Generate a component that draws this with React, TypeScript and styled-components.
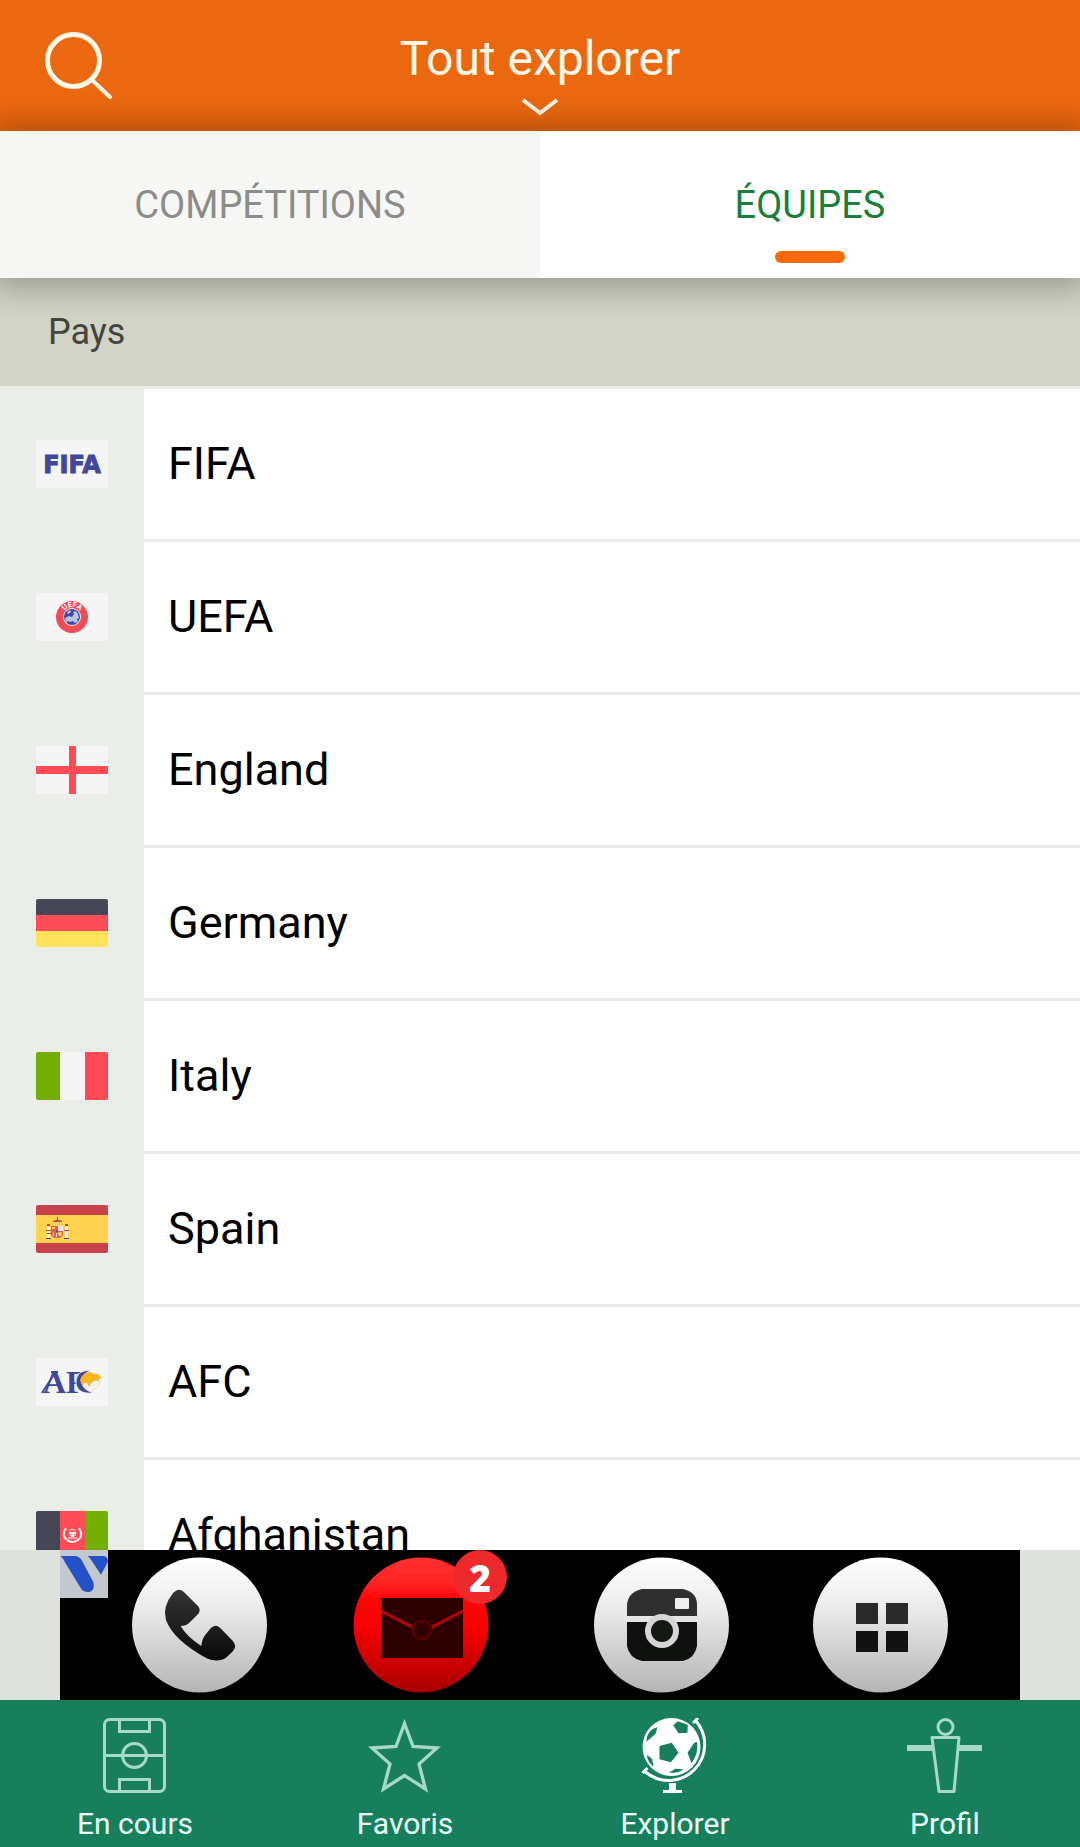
import React, { useState } from "react";
import styled, { createGlobalStyle } from "styled-components";

const GlobalStyle = createGlobalStyle`
  *, *::before, *::after { box-sizing: border-box; }
  body { margin: 0; font-family: Roboto, "Noto Sans", sans-serif; background: #ffffff; }
  button { font: inherit; border: 0; padding: 0; background: none; cursor: pointer; }
  a { color: inherit; text-decoration: none; }
  svg { display: block; }
`;

const Screen = styled.div`
  display: flex;
  flex-direction: column;
  height: 100vh;
  overflow: hidden;
`;

const Header = styled.header`
  display: grid;
  grid-template-columns: 1fr auto 1fr;
  align-items: start;
  padding: 31px 44px 15px;
  background: #ec6810;
`;

const SearchButton = styled.button`
  justify-self: start;
`;

const TitleButton = styled.button`
  display: flex;
  flex-direction: column;
  align-items: center;
  gap: 11px;
  color: #fff8e8;
`;

const Title = styled.h1`
  margin: 0;
  font-size: 48px;
  line-height: 56px;
  font-weight: 400;
`;

const Tabs = styled.div`
  position: relative;
  z-index: 1;
  display: grid;
  grid-template-columns: 1fr 1fr;
  box-shadow: 0 2px 30px 8px rgba(0, 0, 0, 0.28);
`;

const Tab = styled.button<{ $active: boolean }>`
  display: grid;
  grid-template-rows: 1fr auto 1fr;
  justify-items: center;
  min-height: 147px;
  font-size: 38px;
  line-height: 44px;
  color: ${(p) => (p.$active ? "#197f3a" : "#8c8c8a")};
  background: ${(p) => (p.$active ? "#ffffff" : "#f6f6f4")};

  span {
    grid-row: 2;
  }

  &::after {
    content: "";
    grid-row: 3;
    align-self: end;
    width: 70px;
    height: 12px;
    margin-bottom: 15px;
    border-radius: 6px;
    background: ${(p) => (p.$active ? "#ff6a00" : "transparent")};
  }
`;

const SectionTitle = styled.h2`
  margin: 0;
  padding: 32px 48px;
  font-size: 36px;
  line-height: 44px;
  font-weight: 400;
  color: #44453d;
  background: #d1d4c7;
`;

const CountryList = styled.ul`
  flex: 1;
  min-height: 0;
  margin: 0;
  padding: 0;
  list-style: none;
  overflow-y: auto;
  scrollbar-width: none;
  border-top: 3px solid #ebece7;
`;

const CountryLink = styled.a`
  display: grid;
  grid-template-columns: 144px 1fr;
  min-height: 153px;
`;

const FlagCell = styled.span`
  display: flex;
  align-items: center;
  justify-content: center;
  padding-bottom: 3px;
  background: #ebede8;

  svg {
    border-radius: 2px;
  }
`;

const CountryName = styled.span`
  display: flex;
  align-items: center;
  padding-left: 24px;
  border-bottom: 3px solid #ebebeb;
  font-size: 45px;
  line-height: 54px;
  color: #000000;
  background: #ffffff;
`;

const AdBar = styled.aside`
  display: flex;
  justify-content: center;
  background: #dfe1dc;
`;

const AdLink = styled.a`
  background: #000000;
`;

const BottomNav = styled.nav`
  display: grid;
  grid-template-columns: repeat(4, 1fr);
  background: #187f5d;
`;

const NavLink = styled.a<{ $active: boolean }>`
  display: flex;
  flex-direction: column;
  align-items: center;
  gap: 13px;
  padding: 18px 0 5px;
  font-size: 30px;
  line-height: 36px;
  color: #e9fff8;

  svg {
    color: ${(p) => (p.$active ? "#ffffff" : "#a6d9c8")};
  }
`;

const Flag = ({ children }: { children: React.ReactNode }) => (
  <svg width="72" height="48" viewBox="0 0 72 48" aria-hidden="true">
    {children}
  </svg>
);

const FifaFlag = () => (
  <Flag>
    <rect width="72" height="48" fill="#f5f5f5" />
    <text
      x="36"
      y="33"
      textAnchor="middle"
      fontFamily="'DejaVu Sans', sans-serif"
      fontWeight="700"
      fontSize="24"
      fill="#41479b"
      stroke="#41479b"
      strokeWidth="1"
    >
      FIFA
    </text>
  </Flag>
);

const UefaFlag = () => (
  <Flag>
    <rect width="72" height="48" fill="#f5f5f5" />
    <circle cx="36" cy="24" r="16" fill="#ee4c58" />
    <circle cx="36" cy="24" r="9" fill="#f5f5f5" />
    <circle cx="36" cy="24" r="8" fill="#41479b" />
    <path
      d="M29 25l4-2 3 1 2-3-1-2 3-1 2 3 1 4-2 1 1 3-3 1-2-2-3 1-2-1-2 2zM31 19l3-2 1 2-3 2z"
      fill="#b7c3e6"
    />
    <path id="uefa-arc" d="M26 24a10 10 0 0 1 20 0" fill="none" />
    <text fontFamily="Inter, sans-serif" fontWeight="700" fontSize="7" fill="#ffffff" textAnchor="middle">
      <textPath href="#uefa-arc" startOffset="50%">
        UEFA
      </textPath>
    </text>
  </Flag>
);

const EnglandFlag = () => (
  <Flag>
    <rect width="72" height="48" fill="#f5f5f5" />
    <path d="M33 0h7v48h-7zM0 20h72v8H0z" fill="#ff4b55" />
  </Flag>
);

const GermanyFlag = () => (
  <Flag>
    <rect width="72" height="16" fill="#464655" />
    <rect y="16" width="72" height="16" fill="#ff4b55" />
    <rect y="32" width="72" height="16" fill="#ffe15a" />
  </Flag>
);

const ItalyFlag = () => (
  <Flag>
    <rect width="25" height="48" fill="#73af00" />
    <rect x="24" width="25" height="48" fill="#f5f5f5" />
    <rect x="49" width="23" height="48" fill="#ff4b55" />
  </Flag>
);

const SpainFlag = () => (
  <Flag>
    <rect width="72" height="48" fill="#c8414b" />
    <rect y="10" width="72" height="28" fill="#ffd250" />
    <path d="M11 22h3v11h-3zM29 22h3v11h-3z" fill="#f5f5f5" />
    <path d="M10 33h5v1h-5zM28 33h5v1h-5z" fill="#41479b" />
    <path d="M11 19h3v2h-3zM29 19h3v2h-3zM10 25h5v1h-5zM28 25h5v1h-5zM11 28h4v1h-4z" fill="#c8414b" />
    <path d="M15 21h12v8q0 4-6 4t-6-4z" fill="#d9604f" />
    <path d="M22 21h5v5h-5zM17 27h1v4h-1zM20 28h1v4h-1z" fill="#f3e0e6" />
    <circle cx="24" cy="29" r="2" fill="#ffd250" />
    <circle cx="21" cy="26" r="1" fill="#41479b" />
    <path d="M17 17q0-2 4-2v-3h1v3q4 0 4 2z" fill="#c8414b" />
    <path d="M18 18h7v1h-7zM16 22h3v2h-3z" fill="#ffd250" />
  </Flag>
);

const AfcFlag = () => (
  <Flag>
    <rect width="72" height="48" fill="#f5f5f5" />
    <path d="M6 35L19 15" stroke="#41479b" strokeWidth="2" fill="none" />
    <path d="M15 13h7v2h-7z" fill="#41479b" />
    <text x="7" y="35" fontFamily="'Liberation Serif', serif" fontWeight="700" fontSize="32" fill="#41479b">
      AF
    </text>
    <path d="M58 34Q54 36 50 35C43 34 40 29 40 24C40 17 45 11 55 13C48 15 46 19 46 24C46 29 51 34 58 34Z" fill="#41479b" stroke="#f5f5f5" />
    <path
      d="M46 18l3-3 6-1 3 2 4 0 2 2 2 2-3 1-1 3-2-2-2 1-3 2-2 4-2-4-3 0-1 3-2-3-1-3z"
      fill="#fcb521"
    />
    <path d="M63 19a10 10 0 0 1-6 13" fill="none" stroke="#fcc860" strokeDasharray="2 1" />
  </Flag>
);

const AfghanistanFlag = () => (
  <Flag>
    <rect width="24" height="48" fill="#464655" />
    <rect x="24" width="25" height="48" fill="#ff4b55" />
    <rect x="49" width="23" height="48" fill="#73af00" />
    <g fill="none" stroke="#f5f5f5">
      <path d="M30 17q-5 8 1 12 5 4 11 0 6-4 1-12" strokeWidth="2" />
      <path d="M32 27h9M33 24h7M33 20l3-2 4 2" strokeWidth="1" />
    </g>
    <path d="M33 21h7v2h-2v3h-3v-3h-2z" fill="#f5f5f5" />
  </Flag>
);

const countries = [
  { name: "FIFA", Icon: FifaFlag },
  { name: "UEFA", Icon: UefaFlag },
  { name: "England", Icon: EnglandFlag },
  { name: "Germany", Icon: GermanyFlag },
  { name: "Italy", Icon: ItalyFlag },
  { name: "Spain", Icon: SpainFlag },
  { name: "AFC", Icon: AfcFlag },
  { name: "Afghanistan", Icon: AfghanistanFlag },
];

const AdPicture = () => (
  <svg width="960" height="150" viewBox="0 0 960 150" role="img" aria-label="Publicité">
    <defs>
      <linearGradient id="silver" x1="0" y1="0" x2="0" y2="1">
        <stop offset="0" stopColor="#ffffff" />
        <stop offset="0.4" stopColor="#e8e9e8" />
        <stop offset="1" stopColor="#b4b4b4" />
      </linearGradient>
      <linearGradient id="scarlet" x1="0" y1="0" x2="0" y2="1">
        <stop offset="0" stopColor="#ff3030" />
        <stop offset="0.2" stopColor="#ff2222" />
        <stop offset="0.3" stopColor="#ff0508" />
        <stop offset="0.5" stopColor="#fb0000" />
        <stop offset="1" stopColor="#a80000" />
      </linearGradient>
      <linearGradient id="coal" x1="0" y1="0" x2="0" y2="1">
        <stop offset="0" stopColor="#343534" />
        <stop offset="1" stopColor="#080a08" />
      </linearGradient>
    </defs>

    <circle cx="139.500" cy="75" r="67.500" fill="url(#silver)" />
    <g transform="translate(-20 -60) scale(0.3333)">
      <path
        d="M400 308Q418 290 434 308L474 348Q486 362 472 374L448 398Q438 408 422 408Q440 440 484 468Q486 445 498 432L512 415Q526 400 540 413L578 452Q592 468 580 482L560 502Q535 520 500 505Q400 450 378 390Q366 350 400 308Z"
        fill="url(#coal)"
      />
    </g>

    <circle cx="361" cy="75" r="67.500" fill="url(#scarlet)" />
    <rect x="321" y="48" width="82" height="60" fill="#2c0000" />
    <path d="M321 61l33 17M403 61l-33 17" stroke="#b80404" strokeWidth="3" fill="none" />
    <circle cx="362" cy="80" r="9" fill="#300000" stroke="#560000" strokeWidth="3" />
    <circle cx="420" cy="27" r="27" fill="#ee292b" />
    <text x="420" y="42" textAnchor="middle" fontFamily="'Open Sans', sans-serif" fontWeight="800" fontSize="37" fill="#ffffff">
      2
    </text>

    <circle cx="601.500" cy="75" r="67.500" fill="url(#silver)" />
    <path d="M582 39h41q14 3 14 16v11h-70V55q1-13 15-16z" fill="#2e2f2e" />
    <path d="M567 72h70v24q-2 12-14 15h-41q-13-3-15-15z" fill="#0e110d" />
    <circle cx="602" cy="81" r="14" fill="#151815" stroke="#d4d5d4" strokeWidth="6" />
    <rect x="615" y="48" width="14" height="11" rx="1" fill="#eeeeee" />

    <circle cx="820.500" cy="75" r="67.500" fill="url(#silver)" />
    <path d="M796 53h22v21h-22zM826 53h22v21h-22z" fill="#292a29" />
    <path d="M796 81h22v21h-22zM826 81h22v21h-22z" fill="#101310" />

    <rect width="48" height="48" fill="#c3c8cf" />
    <g transform="translate(-20 -60) scale(0.3333)" fill="#2451c8">
      <path d="M62 198H104Q118 198 126 212L160 276Q166 300 148 306Q130 308 122 294L78 222Q70 205 62 198Z" />
      <path d="M143 198H190Q204 200 204 215L183 254L156 214Q150 203 143 198Z" />
    </g>
  </svg>
);

const NavIcon = ({ children }: { children: React.ReactNode }) => (
  <svg width="76" height="75" viewBox="0 0 76 75" aria-hidden="true">
    {children}
  </svg>
);

const PitchIcon = () => (
  <NavIcon>
    <g fill="none" stroke="currentColor" strokeWidth="3">
      <rect x="7.500" y="1.500" width="60" height="72" rx="5" />
      <path d="M7 37.500h60M22.500 2v11.500h30V2M22.500 73V61.500h30V73" />
      <circle cx="37.500" cy="37.500" r="12" />
    </g>
  </NavIcon>
);

const StarIcon = () => (
  <NavIcon>
    <path
      d="M37.500 5.500L29 28.500L5 30L23 46L16.500 71L37.500 57.500L58.500 71L52 46L70 30L46 28.500Z"
      fill="none"
      stroke="currentColor"
      strokeWidth="3.300"
      strokeMiterlimit="10"
    />
  </NavIcon>
);

const GlobeIcon = () => (
  <NavIcon>
    <circle cx="34.500" cy="29" r="29" fill="currentColor" />
    <path
      d="M22.500 28L34.800 24.700L41.500 34.700L33.800 44.300L22.500 41.300ZM36.200 7.300L40.800 3.300L50.800 6.700L50.500 14.700L41.500 15.300ZM9.200 23.700Q9.500 12 20.500 9L18.500 16ZM50.500 34.700L57.200 24.700L60 24Q62 35 54.500 45.300ZM9.800 36.700L15.200 41L16.500 48.700Q10.500 44 9.800 36.700ZM32 54.500L38.500 50.700L46.500 51.300Q40 56 32 54.500Z"
      fill="#187f5d"
    />
    <path
      d="M59 3A36 36 0 0 1 8.500 54M56 5l5-5M5.500 55l5-5"
      fill="none"
      stroke="currentColor"
      strokeWidth="3"
    />
    <path d="M32 65h7v7h6v3H26v-3h6z" fill="currentColor" />
  </NavIcon>
);

const ProfileIcon = () => (
  <NavIcon>
    <g fill="none" stroke="currentColor" strokeWidth="3" strokeLinejoin="round">
      <circle cx="38.500" cy="9" r="7.500" />
      <path d="M25 19.500h27l-5 54H32z" />
    </g>
    <path d="M0 27h26v6H0zM52 27h23v6H52z" fill="currentColor" />
  </NavIcon>
);

const navItems = [
  { label: "En cours", Icon: PitchIcon },
  { label: "Favoris", Icon: StarIcon },
  { label: "Explorer", Icon: GlobeIcon },
  { label: "Profil", Icon: ProfileIcon },
];

const tabs = ["COMPÉTITIONS", "ÉQUIPES"];

export default function App() {
  const [activeTab, setActiveTab] = useState("ÉQUIPES");

  return (
    <Screen>
      <GlobalStyle />
      <Header>
        <SearchButton type="button" aria-label="Rechercher">
          <svg width="70" height="70" viewBox="0 0 70 70" fill="none" stroke="#fff8e4" strokeWidth="5">
            <circle cx="29.500" cy="29.500" r="26" />
            <path d="M48 49l18 17" strokeWidth="4" strokeLinecap="round" />
          </svg>
        </SearchButton>
        <TitleButton type="button" aria-haspopup="menu">
          <Title>Tout explorer</Title>
          <svg width="38" height="18" viewBox="0 0 38 18" fill="none" stroke="currentColor" strokeWidth="4">
            <path d="M2 2l17 13L36 2" />
          </svg>
        </TitleButton>
      </Header>

      <Tabs role="tablist">
        {tabs.map((tab) => (
          <Tab
            key={tab}
            type="button"
            role="tab"
            aria-selected={tab === activeTab}
            $active={tab === activeTab}
            onClick={() => setActiveTab(tab)}
          >
            <span>{tab}</span>
          </Tab>
        ))}
      </Tabs>

      <SectionTitle>Pays</SectionTitle>
      <CountryList>
        {countries.map(({ name, Icon }) => (
          <li key={name}>
            <CountryLink href={`#${name.toLowerCase()}`}>
              <FlagCell>
                <Icon />
              </FlagCell>
              <CountryName>{name}</CountryName>
            </CountryLink>
          </li>
        ))}
      </CountryList>

      <AdBar>
        <AdLink href="#publicite">
          <AdPicture />
        </AdLink>
      </AdBar>

      <BottomNav>
        {navItems.map(({ label, Icon }) => (
          <NavLink key={label} href={`#${label.toLowerCase().replace(" ", "-")}`} $active={label === "Explorer"}>
            <Icon />
            {label}
          </NavLink>
        ))}
      </BottomNav>
    </Screen>
  );
}
